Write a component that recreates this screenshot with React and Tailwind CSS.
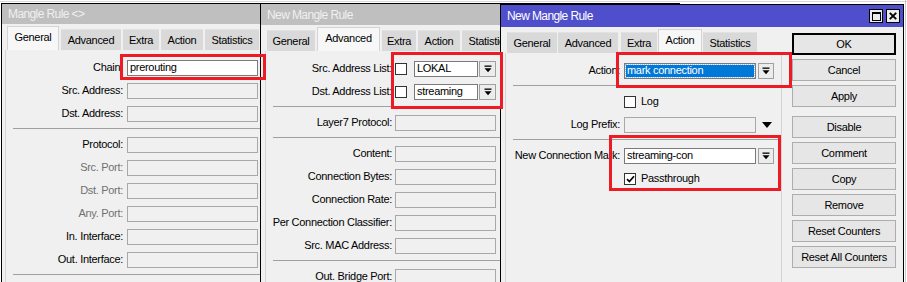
import React from "react";

function DropIcon() {
  return (
    <svg width="8" height="8" viewBox="0 0 8 8" className="block">
      <rect x="0.5" y="0.5" width="7" height="1.3" fill="#000" />
      <path d="M0.5 3.2H7.5L4 7.2Z" fill="#000" />
    </svg>
  );
}

function DropBtn({ cls = "w-[16px] ml-[2px]" }) {
  return (
    <div className={`${cls} h-[16px] border border-[#a0a0a0] bg-[#ececec] flex items-center justify-center shrink-0`}>
      <DropIcon />
    </div>
  );
}

function Check({ checked }) {
  return (
    <div className="w-[12px] h-[12px] border border-[#333] bg-white flex items-center justify-center shrink-0">
      {checked && (
        <svg width="9" height="8" viewBox="0 0 9 8" className="block">
          <path d="M1 4.2L3.4 6.6L8 1.2" stroke="#000" strokeWidth="1.7" fill="none" />
        </svg>
      )}
    </div>
  );
}

function Field({ cls, value, white, selected }) {
  return (
    <div
      className={`${cls} h-[16px] border shrink-0 flex items-center overflow-hidden whitespace-nowrap ${
        white || selected ? "bg-white border-[#7a7a7a]" : "bg-[#f0f0f0] border-[#a8a8a8]"
      }`}
    >
      {selected ? (
        <div className="m-[1px] flex-1 h-[12px] bg-[#0078d7] text-white pl-[1px] flex items-center outline outline-1 outline-dotted outline-[#9cc6ee]">
          {value}
        </div>
      ) : (
        <span className="pl-[2px]">{value}</span>
      )}
    </div>
  );
}

function Row({ labelCls, label, dim, children }) {
  return (
    <div className="flex items-center h-[23px] shrink-0">
      <div
        className={`${labelCls} shrink-0 text-right whitespace-nowrap ${dim ? "text-[#707070]" : "text-black"}`}
      >
        {label}
      </div>
      {children}
    </div>
  );
}

function Sep() {
  return <div className="h-px bg-[#a0a0a0] mt-[3px] mb-[4px] ml-[7px] mr-[3px] shrink-0" />;
}

function Tabs({ items }) {
  return (
    <div className="flex items-end h-[24px] pl-[2px] shrink-0">
      {items.map(([label, cls, active]) => (
        <div
          key={label}
          className={`${cls} shrink-0 flex items-center justify-center whitespace-nowrap overflow-hidden ${
            active
              ? "h-[24px] bg-[#f7f7f7] border border-b-0 border-[#d4d4d4] pb-[2px]"
              : "h-[21px] bg-[#d9d9d9] border-t border-[#e2e2e2]"
          }`}
        >
          {label}
        </div>
      ))}
    </div>
  );
}

function Window1() {
  const L = "w-[121px] pr-[4px]";
  const F = "w-[131px]";
  return (
    <div className="absolute left-[1px] top-[3px] w-[300px] h-[300px] border border-black bg-[#f0f0f0] flex flex-col">
      <div className="h-[20px] bg-[#bfbfbf] text-[#f0f0f0] text-[12px] tracking-[-0.6px] flex items-center pl-[6px] shrink-0">
        Mangle Rule &lt;&gt;
      </div>
      <div className="pl-[3px] pt-[2px] flex flex-col flex-1">
        <Tabs
          items={[
            ["General", "w-[52px]", true],
            ["Advanced", "ml-[2px] w-[60px]"],
            ["Extra", "ml-[2px] w-[36px]"],
            ["Action", "ml-[2px] w-[42px]"],
            ["Statistics", "ml-[2px] w-[54px]"],
          ]}
        />
        <div className="flex flex-col flex-1 border-l border-[#d4d4d4] pt-[6px]">
          <Row labelCls={L} label="Chain:">
            <Field cls={F} value="prerouting" white />
          </Row>
          <Row labelCls={L} label="Src. Address:">
            <Field cls={F} />
          </Row>
          <Row labelCls={L} label="Dst. Address:">
            <Field cls={F} />
          </Row>
          <Sep />
          <Row labelCls={L} label="Protocol:">
            <Field cls={F} />
          </Row>
          <Row labelCls={L} label="Src. Port:" dim>
            <Field cls={F} />
          </Row>
          <Row labelCls={L} label="Dst. Port:" dim>
            <Field cls={F} />
          </Row>
          <Row labelCls={L} label="Any. Port:" dim>
            <Field cls={F} />
          </Row>
          <Row labelCls={L} label="In. Interface:">
            <Field cls={F} />
          </Row>
          <Row labelCls={L} label="Out. Interface:">
            <Field cls={F} />
          </Row>
          <Sep />
        </div>
      </div>
    </div>
  );
}

function Window2() {
  const L = "w-[129px] pr-[3px]";
  const F = "w-[101px]";
  return (
    <div className="absolute left-[260px] top-[3px] w-[420px] h-[300px] border border-black bg-[#f0f0f0] flex flex-col">
      <div className="h-[21px] bg-[#bfbfbf] text-[#f0f0f0] text-[12px] tracking-[-0.6px] flex items-center pl-[6px] shrink-0">
        New Mangle Rule
      </div>
      <div className="pl-[4px] pt-[2px] flex flex-col flex-1">
        <Tabs
          items={[
            ["General", "w-[48px]"],
            ["Advanced", "ml-[2px] w-[63px]", true],
            ["Extra", "ml-[2px] w-[34px]"],
            ["Action", "ml-[2px] w-[42px]"],
            ["Statistics", "ml-[2px] w-[54px]"],
          ]}
        />
        <div className="flex flex-col flex-1 border-l border-[#d4d4d4] pt-[6px]">
          <Row labelCls={L} label="Src. Address List:">
            <Check />
            <div className="ml-[7px]">
              <Field cls="w-[64px]" value="LOKAL" white />
            </div>
            <DropBtn cls="w-[17px] ml-[1px]" />
          </Row>
          <Row labelCls={L} label="Dst. Address List:">
            <Check />
            <div className="ml-[7px]">
              <Field cls="w-[64px]" value="streaming" white />
            </div>
            <DropBtn cls="w-[17px] ml-[1px]" />
          </Row>
          <Sep />
          <Row labelCls={L} label="Layer7 Protocol:">
            <Field cls={F} />
          </Row>
          <Sep />
          <Row labelCls={L} label="Content:">
            <Field cls={F} />
          </Row>
          <Row labelCls={L} label="Connection Bytes:">
            <Field cls={F} />
          </Row>
          <Row labelCls={L} label="Connection Rate:">
            <Field cls={F} />
          </Row>
          <Row labelCls={L} label="Per Connection Classifier:">
            <Field cls={F} />
          </Row>
          <Row labelCls={L} label="Src. MAC Address:">
            <Field cls={F} />
          </Row>
          <Sep />
          <Row labelCls={L} label="Out. Bridge Port:">
            <Field cls={F} />
          </Row>
        </div>
      </div>
    </div>
  );
}

function Btn({ children, cls = "mt-[4px]", def }) {
  return (
    <div
      className={`${cls} w-[104px] h-[22px] shrink-0 border bg-[#e6e6e6] flex items-center justify-center whitespace-nowrap ${
        def ? "border-black shadow-[inset_0_0_0_1px_#000]" : "border-[#adadad]"
      }`}
    >
      {children}
    </div>
  );
}

function Window3() {
  const L = "w-[118px] pr-[4px]";
  const F = "w-[132px]";
  return (
    <div className="absolute left-[500px] top-[4px] w-[404px] h-[300px] border border-black bg-[#f0f0f0] flex flex-col">
      <div className="h-[22px] bg-[#4f4fcb] text-white text-[12px] tracking-[-0.6px] flex items-center pl-[6px] shrink-0">
        <span>New Mangle Rule</span>
        <div className="ml-auto flex gap-[3px] pr-[3px] tracking-normal">
          <div className="w-[14px] h-[14px] border border-black bg-[#ececec] flex items-center justify-center">
            <svg width="9" height="9" viewBox="0 0 9 9" className="block">
              <rect x="0.5" y="0.5" width="8" height="8" fill="none" stroke="#000" strokeWidth="1" />
              <rect x="0" y="0" width="9" height="2" fill="#000" />
            </svg>
          </div>
          <div className="w-[14px] h-[14px] border border-black bg-[#ececec] flex items-center justify-center">
            <svg width="8" height="8" viewBox="0 0 8 8" className="block">
              <path d="M0.8 0.8L7.2 7.2M7.2 0.8L0.8 7.2" stroke="#000" strokeWidth="1.9" />
            </svg>
          </div>
        </div>
      </div>
      <div className="pl-[4px] flex flex-row flex-1">
        <div className="w-[277px] pt-[2px] flex flex-col shrink-0">
          <Tabs
            items={[
              ["General", "w-[50px]"],
              ["Advanced", "ml-[1px] w-[60px]"],
              ["Extra", "ml-[3px] w-[36px]"],
              ["Action", "ml-[1px] w-[44px]", true],
              ["Statistics", "ml-[1px] w-[54px]"],
            ]}
          />
          <div className="flex flex-col flex-1 border-l border-r border-[#d4d4d4] pt-[6px]">
            <Row labelCls={L} label="Action:">
              <Field cls={F} value="mark connection" selected />
              <DropBtn />
            </Row>
            <Sep />
            <Row labelCls={L} label="">
              <Check />
              <span className="ml-[5px]">Log</span>
            </Row>
            <Row labelCls={L} label="Log Prefix:">
              <Field cls={F} />
              <svg width="10" height="6" viewBox="0 0 10 6" className="block ml-[6px]">
                <path d="M0 0H10L5 6Z" fill="#000" />
              </svg>
            </Row>
            <Sep />
            <Row labelCls={L} label="New Connection Mark:">
              <Field cls={F} value="streaming-con" white />
              <DropBtn />
            </Row>
            <Row labelCls={L} label="">
              <Check checked />
              <span className="ml-[5px]">Passthrough</span>
            </Row>
          </div>
        </div>
        <div className="ml-[10px] pt-[6px] flex flex-col">
          <Btn cls="" def>OK</Btn>
          <Btn>Cancel</Btn>
          <Btn>Apply</Btn>
          <Btn cls="mt-[9px]">Disable</Btn>
          <Btn>Comment</Btn>
          <Btn>Copy</Btn>
          <Btn>Remove</Btn>
          <Btn>Reset Counters</Btn>
          <Btn>Reset All Counters</Btn>
        </div>
      </div>
    </div>
  );
}

export default function App() {
  return (
    <div className="relative w-[907px] h-[282px] overflow-hidden bg-white font-['Liberation_Sans',Arial,sans-serif] text-[11px] tracking-[-0.3px] leading-none text-black">
      <div className="absolute left-0 top-[1px] w-[907px] h-px bg-[#d8d8d8]" />
      <div className="absolute left-[905px] top-0 w-px h-[282px] bg-[#c8c8c8]" />
      <Window1 />
      <Window2 />
      <Window3 />
      <div className="absolute left-[120px] top-[54px] w-[146px] h-[26px] border-[3px] border-[#ed1c24]" />
      <div className="absolute left-[391px] top-[52px] w-[112px] h-[57px] border-[3px] border-[#ed1c24]" />
      <div className="absolute left-[616px] top-[52px] w-[176px] h-[36px] border-[3px] border-[#ed1c24]" />
      <div className="absolute left-[609px] top-[135px] w-[172px] h-[56px] border-[3px] border-[#ed1c24]" />
    </div>
  );
}
